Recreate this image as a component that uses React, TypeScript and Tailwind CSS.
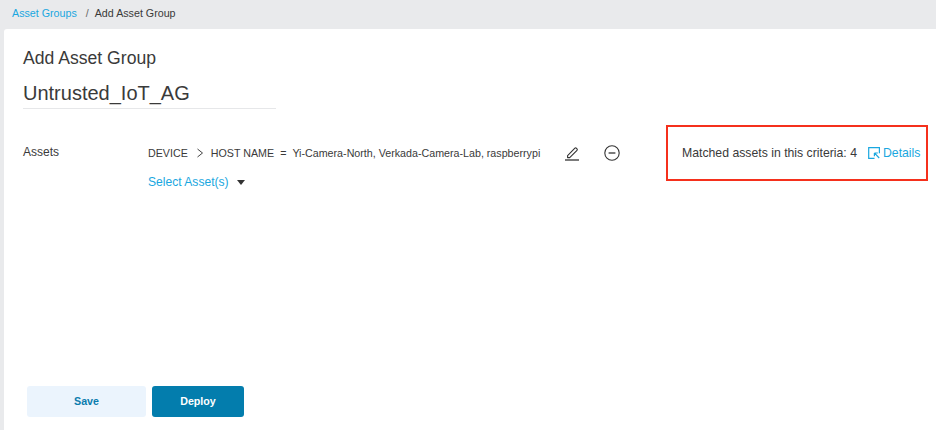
import React from "react";

function EditIcon() {
  return (
    <svg width="16" height="16" viewBox="0 0 16 16" fill="none" stroke="#333" strokeWidth="1.1">
      <path d="M3.6 10.6 10.9 3.2a1 1 0 0 1 1.4 0l.7.7a1 1 0 0 1 0 1.4L5.7 12.6H3.6z" strokeLinejoin="round" />
      <path d="M1 15h14" strokeWidth="1.3" />
    </svg>
  );
}

function MinusIcon() {
  return (
    <svg width="16" height="16" viewBox="0 0 16 16" fill="none" stroke="#333" strokeWidth="1.1">
      <circle cx="8" cy="8" r="7.2" />
      <path d="M4.6 8h6.8" strokeWidth="1.3" />
    </svg>
  );
}

function DetailsIcon() {
  return (
    <svg width="12" height="12" viewBox="0 0 12 12" fill="none" stroke="#1aa7e0" strokeWidth="1.2">
      <path d="M11.4 6.2V.7H.7v10.6h5.8" />
      <path d="M6.4 6h3.4M6.4 6v3.2M6.6 6.2l4.6 4.8" />
    </svg>
  );
}

export default function App() {
  return (
    <div className="w-[936px] h-[430px] overflow-hidden flex flex-col bg-[#e9eaec] font-['Liberation_Sans',Arial,sans-serif] text-[#3a3a3a]">
      <nav className="h-[29px] shrink-0 pl-3 flex items-center text-[10.7px] pb-[2px]">
        <span className="text-[#1aa7e0]">Asset Groups</span>
        <span className="ml-[9px] mr-[6px] text-[#666]">/</span>
        <span>Add Asset Group</span>
      </nav>
      <main className="flex-1 ml-1 bg-white rounded-tl-[3px] flex flex-col pl-[19px]">
        <h1 className="mt-[18px] text-[17.6px] leading-[22px] font-normal">Add Asset Group</h1>
        <div className="mt-[9px] w-[253px] h-[31px] border-b border-[#e6e7e9] text-[20px] leading-[30px]">Untrusted_IoT_AG</div>
        <section className="mt-[17px] flex items-start">
          <div className="w-[125px] pt-[19px] text-[12px] leading-[14px]">Assets</div>
          <div className="w-[518px] pt-[20px]">
            <div className="flex items-center h-[14px] text-[10.7px]">
              <span>DEVICE</span>
              <svg className="ml-[8px] mr-[7px]" width="8" height="10" viewBox="0 0 8 10" fill="none" stroke="#444" strokeWidth="1">
                <path d="M1.5 1l5 4-5 4" />
              </svg>
              <span>HOST NAME</span>
              <span className="ml-[6px] mr-[6px]">=</span>
              <span>Yi-Camera-North, Verkada-Camera-Lab, raspberrypi</span>
              <span className="ml-[24px]"><EditIcon /></span>
              <span className="ml-[24px]"><MinusIcon /></span>
            </div>
            <div className="mt-[15px] flex items-center text-[12.1px] leading-[14px] text-[#1aa7e0]">
              <span>Select Asset(s)</span>
              <svg className="ml-[8px]" width="8" height="5" viewBox="0 0 8 5" fill="#333">
                <path d="M0 0h8L4 5z" />
              </svg>
            </div>
          </div>
          <div className="w-[262px] h-[56px] -mt-px border-2 border-[#f5301c] flex items-center pl-[14px] text-[12.25px]">
            <span>Matched assets in this criteria: 4</span>
            <span className="ml-[11px]"><DetailsIcon /></span>
            <span className="ml-[3px] text-[#1aa7e0]">Details</span>
          </div>
        </section>
        <div className="mt-auto mb-[13px] ml-[4px] flex gap-[6px] text-[10.7px] font-bold">
          <button className="w-[119px] h-[31px] rounded-[3px] bg-[#ebf4fd] text-[#0b7cae]">Save</button>
          <button className="w-[92px] h-[31px] rounded-[3px] bg-[#037dad] text-white">Deploy</button>
        </div>
      </main>
    </div>
  );
}
